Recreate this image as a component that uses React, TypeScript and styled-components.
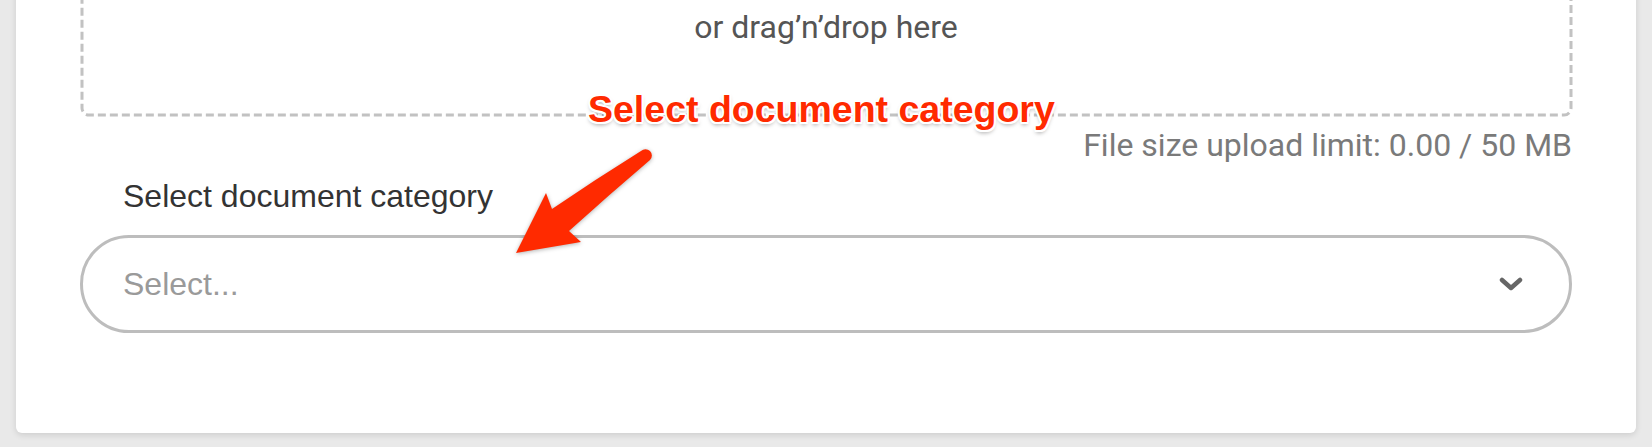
import React from "react";
import styled, { createGlobalStyle } from "styled-components";

const GlobalStyle = createGlobalStyle`
  html, body {
    margin: 0;
    padding: 0;
    background: #e9e9e9;
  }
`;

const Screen = styled.div`
  position: relative;
  height: 447px;
  overflow: hidden;
  background: #e9e9e9;
`;

const Card = styled.div`
  margin: -50px 16px 0;
  padding: 20px 64px 100px;
  background: #fff;
  border-radius: 6px;
  box-shadow: 0 2px 6px rgba(0, 0, 0, 0.12);
  display: flex;
  flex-direction: column;
`;

const DropZone = styled.div`
  position: relative;
  border: 3px solid transparent;
  padding: 35px 0 67px;
  text-align: center;
  font-family: Roboto, "Liberation Sans", sans-serif;
  font-size: 32px;
  line-height: 38px;
  color: #555;
`;

// dashed outline of the drop area, drawn so dash length can be set
const DashedEdge = styled.svg`
  position: absolute;
  inset: -1.5px;
  width: calc(100% + 3px);
  height: calc(100% + 3px);
  overflow: visible;
  pointer-events: none;

  rect {
    fill: none;
    stroke: #c2c2c2;
    stroke-width: 3;
    stroke-dasharray: 8 4;
  }
`;

const LimitNote = styled.div`
  margin-top: 10px;
  text-align: right;
  font-family: Roboto, "Liberation Sans", sans-serif;
  font-size: 32px;
  line-height: 38px;
  color: #7a7a7a;
`;

const FieldLabel = styled.label`
  margin: 14px 0 0 43px;
  font-family: "Liberation Sans", Arial, sans-serif;
  font-size: 32px;
  line-height: 36px;
  color: #333;
`;

const SelectBox = styled.div`
  margin-top: 21px;
  height: 98px;
  box-sizing: border-box;
  border: 3px solid #bdbdbd;
  border-radius: 49px;
  padding: 0 46px 0 40px;
  display: flex;
  align-items: center;
  justify-content: space-between;
`;

const Placeholder = styled.span`
  font-family: "Liberation Sans", Arial, sans-serif;
  font-size: 32px;
  line-height: 36px;
  color: #9a9a9a;
`;

const Chevron = styled.svg`
  width: 24px;
  height: 14px;
  display: block;
`;

// annotation layer drawn on top of the form
const Callout = styled.div<{ $x: number; $y: number }>`
  position: absolute;
  left: ${(p) => p.$x}px;
  top: ${(p) => p.$y}px;
  font-family: "Liberation Sans", Arial, sans-serif;
  font-weight: 700;
  font-size: 37.5px;
  line-height: 42px;
  color: #ff2a00;
  white-space: nowrap;
  text-shadow:
    2px 0 0 #fff, -2px 0 0 #fff, 0 2px 0 #fff, 0 -2px 0 #fff,
    1.5px 1.5px 0 #fff, -1.5px 1.5px 0 #fff, 1.5px -1.5px 0 #fff, -1.5px -1.5px 0 #fff,
    0 3px 4px rgba(0, 0, 0, 0.35);
`;

const Arrow = styled.svg<{ $x: number; $y: number }>`
  position: absolute;
  left: ${(p) => p.$x}px;
  top: ${(p) => p.$y}px;
  width: 160px;
  height: 130px;
  overflow: visible;
  filter: drop-shadow(0 1px 2px rgba(0, 0, 0, 0.3));
`;

export default function App() {
  return (
    <Screen>
      <GlobalStyle />
      <Card>
        <DropZone>
          <DashedEdge>
            <rect x="0" y="0" width="100%" height="100%" rx="7" ry="7" />
          </DashedEdge>
          or drag’n’drop here
        </DropZone>
        <LimitNote>File size upload limit: 0.00 / 50 MB</LimitNote>
        <FieldLabel>Select document category</FieldLabel>
        <SelectBox>
          <Placeholder>Select...</Placeholder>
          <Chevron viewBox="0 0 24 14">
            <polyline
              points="3,3 12,11 21,3"
              fill="none"
              stroke="#666"
              strokeWidth="4.5"
              strokeLinecap="round"
              strokeLinejoin="round"
            />
          </Chevron>
        </SelectBox>
      </Card>

      <Callout $x={588} $y={88}>
        Select document category
      </Callout>
      <Arrow $x={500} $y={140} viewBox="0 0 160 130">
        <path
          d="M141 11 Q96 39 52 69 L46 53 L16 113 L81 102 L69 91 Q110 54 150 20 A5.5 5.5 0 0 0 141 11 Z"
          fill="#ff2a00"
        />
      </Arrow>
    </Screen>
  );
}
